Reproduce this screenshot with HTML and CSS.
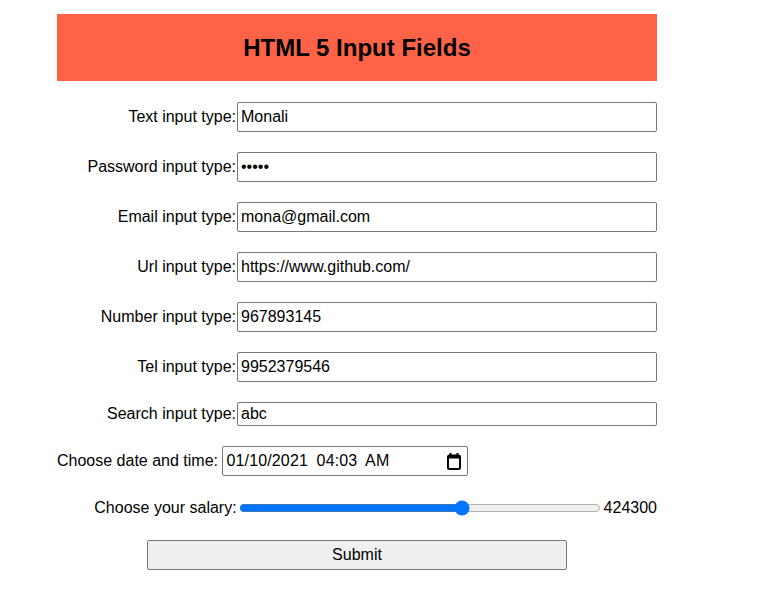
FILE: index.html
```html
<!DOCTYPE html>
<html lang="en">
<head>
<meta charset="utf-8">
<title>HTML 5 Input Fields</title>
<link rel="stylesheet" href="styles.css">
</head>
<body>
<div class="page">
  <header class="banner"><h1>HTML 5 Input Fields</h1></header>
  <form class="form">
    <div class="row"><label>Text input type:</label><input class="field" type="text" value="Monali"></div>
    <div class="row"><label>Password input type:</label><input class="field" type="password" value="mona1"></div>
    <div class="row"><label>Email input type:</label><input class="field" type="email" value="mona@gmail.com"></div>
    <div class="row"><label>Url input type:</label><input class="field" type="url" value="https://www.github.com/"></div>
    <div class="row"><label>Number input type:</label><input class="field" type="text" value="967893145"></div>
    <div class="row"><label>Tel input type:</label><input class="field" type="tel" value="9952379546"></div>
    <div class="row search-row"><label>Search input type:</label><input class="field search" type="text" value="abc"></div>
    <div class="row start"><label>Choose date and time: </label>
      <div class="date">
        <input class="date-text" type="text" value="01/10/2021 04:03 AM">
        <svg class="cal" width="14" height="17" viewBox="0 0 14 17" aria-hidden="true">
          <rect x="2.5" y="0" width="2" height="3" fill="#000"/>
          <rect x="9.5" y="0" width="2" height="3" fill="#000"/>
          <rect x="1" y="2.5" width="12" height="13.5" rx="1.5" fill="none" stroke="#000" stroke-width="2"/>
          <rect x="1" y="2.5" width="12" height="3" fill="#000"/>
        </svg>
      </div>
    </div>
    <div class="row range-row"><label>Choose your salary:</label><input class="range" type="range" min="0" max="682000" value="424300"><output class="out">424300</output></div>
    <div class="actions"><button class="submit" type="button">Submit</button></div>
  </form>
</div>
</body>
</html>
```
FILE: styles.css
```css
html, body {
  margin: 0;
  padding: 0;
  background: #ffffff;
}
body {
  font-family: "Liberation Sans", Arial, sans-serif;
  font-size: 16px;
  color: #000;
}
.page {
  width: 600px;
  margin-left: 57px;
  padding-top: 14px;
}
.banner {
  background: #ff6347;
  height: 67px;
  display: flex;
  align-items: center;
  justify-content: center;
}
.banner h1 {
  margin: 0;
  font-size: 24px;
  font-weight: bold;
  line-height: 1;
}
.form {
  margin-top: 21px;
  display: flex;
  flex-direction: column;
  gap: 20px;
}
.row {
  display: flex;
  align-items: center;
  justify-content: flex-end;
  height: 30px;
  line-height: 1;
}
.row.start {
  justify-content: flex-start;
}
.row label {
  white-space: pre;
}
.field {
  box-sizing: border-box;
  width: 420px;
  height: 30px;
  margin: 0 0 0 1px;
  padding: 0 3px;
  border: 1px solid #767676;
  border-radius: 2px;
  font-family: "Liberation Sans", Arial, sans-serif;
  font-size: 16px;
  color: #000;
  background: #fff;
}
.search-row {
  height: 24px;
}
.field.search {
  height: 24px;
}
.date {
  box-sizing: border-box;
  width: 246px;
  height: 30px;
  margin-left: 0;
  padding: 0 5px 0 3px;
  border: 1px solid #767676;
  border-radius: 2px;
  display: flex;
  align-items: center;
  background: #fff;
}
.date-text {
  flex: 1;
  min-width: 0;
  border: 0;
  padding: 0;
  margin: 0;
  outline: none;
  font-family: "Liberation Sans", Arial, sans-serif;
  font-size: 16px;
  word-spacing: 4px;
  letter-spacing: 0.15px;
  color: #000;
  background: transparent;
}
.cal {
  flex: none;
  margin-right: 1px;
}
.range-row {
  height: 24px;
}
.range {
  width: 362px;
  margin: 0 3px 0 2px;
  accent-color: #0075ff;
}
.out {
  font-size: 16px;
}
.actions {
  display: flex;
  justify-content: center;
}
.submit {
  box-sizing: border-box;
  width: 420px;
  height: 30px;
  border: 1px solid #767676;
  border-radius: 2px;
  background: #efefef;
  font-family: "Liberation Sans", Arial, sans-serif;
  font-size: 16px;
  color: #000;
}
```
